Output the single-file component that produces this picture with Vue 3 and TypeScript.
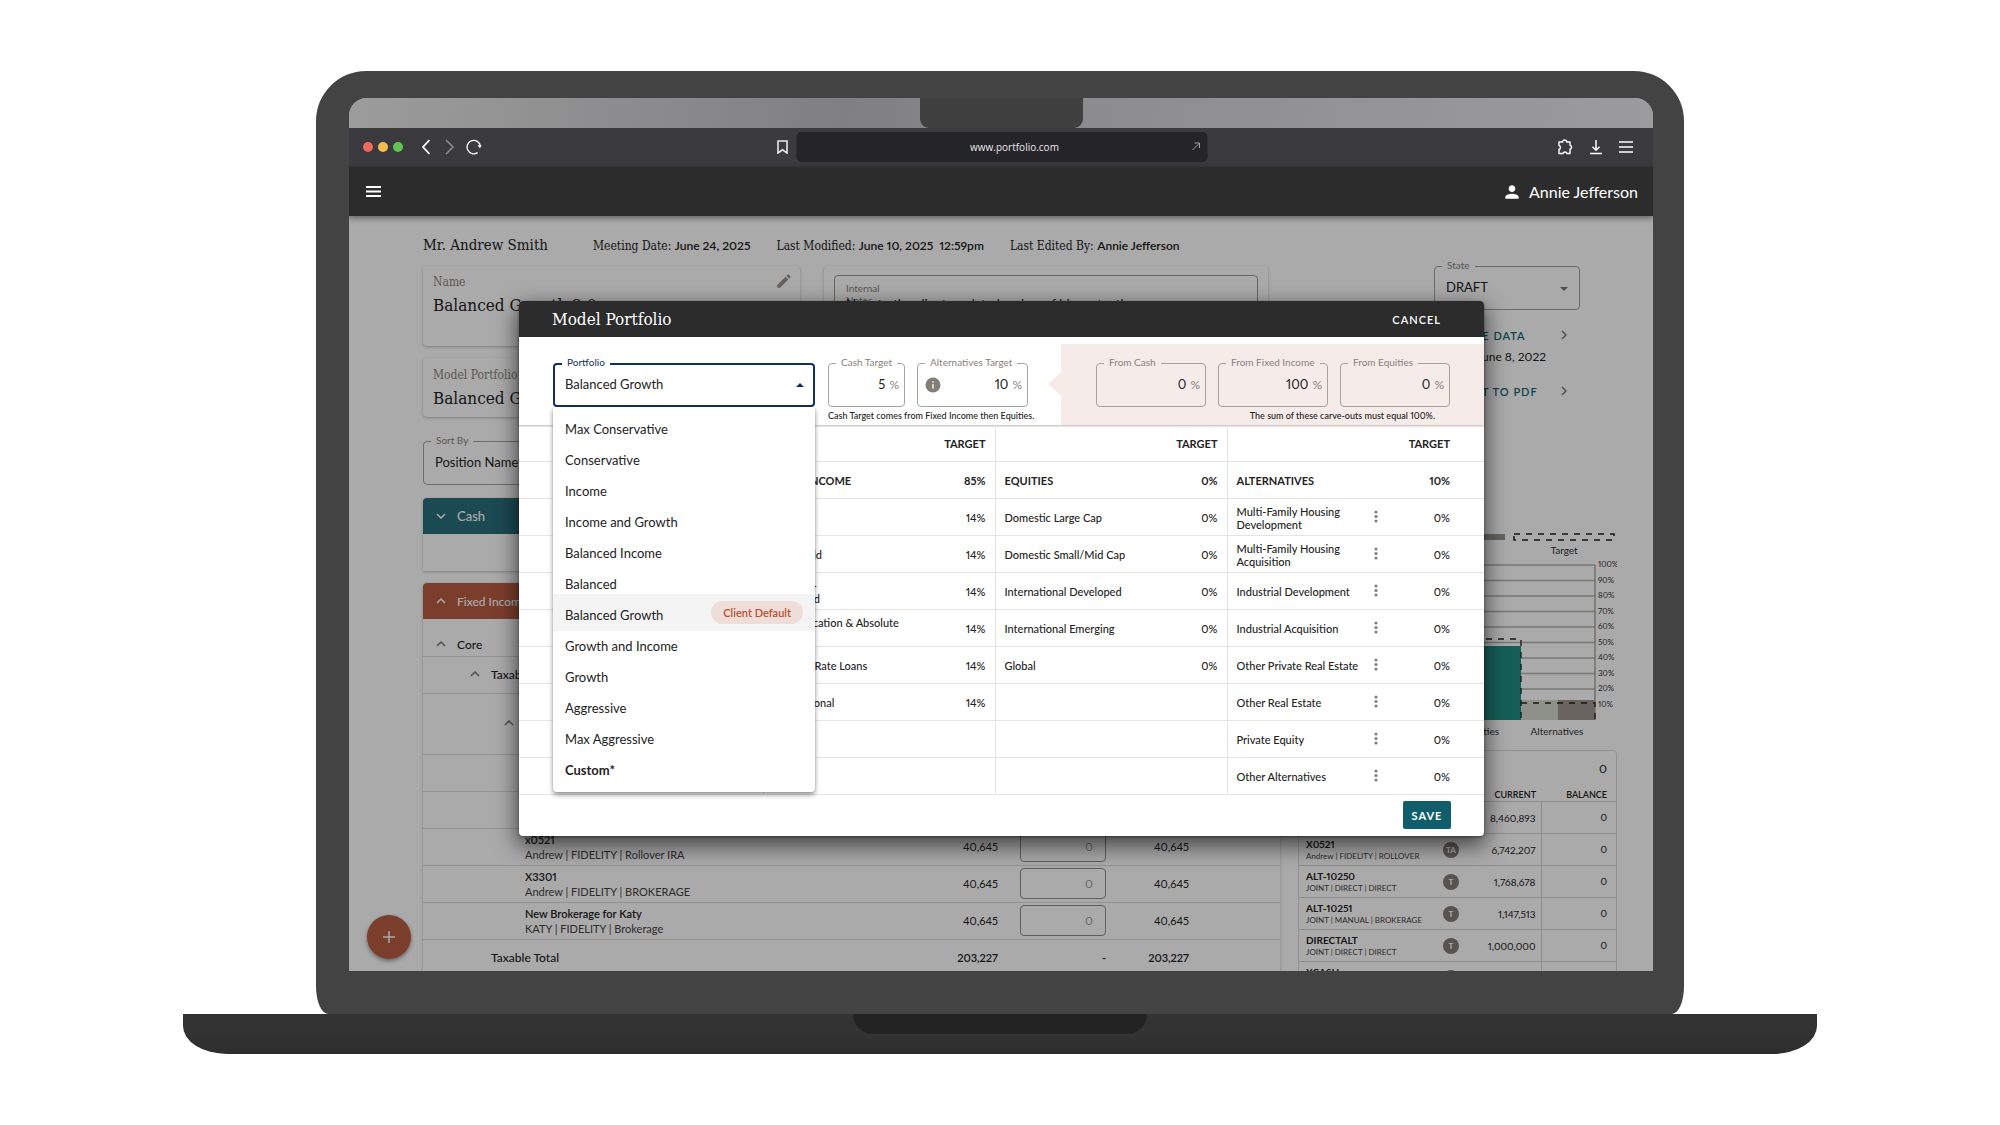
<script setup lang="ts">
import { ref } from 'vue'

interface Account { name: string; detail: string; tag: string; current: string; balance: string }
interface Alternative { name: string; value: string }

const portfolios: string[] = [
  'Max Conservative', 'Conservative', 'Income', 'Income and Growth', 'Balanced Income', 'Balanced',
  'Balanced Growth', 'Growth and Income', 'Growth', 'Aggressive', 'Max Aggressive', 'Custom*',
]
const selected = ref('Balanced Growth')
const clientDefault = 'Balanced Growth'

const fixedIncome: string[] = [
  'Core', 'High Yield', 'Inflation-\nProtected', 'Diversification & Absolute\nReturn',
  'Floating Rate Loans', 'International', '', '',
]
const equities: string[] = [
  'Domestic Large Cap', 'Domestic Small/Mid Cap', 'International Developed',
  'International Emerging', 'Global', '', '', '',
]
const alternatives: Alternative[] = [
  'Multi-Family Housing Development', 'Multi-Family Housing Acquisition', 'Industrial Development',
  'Industrial Acquisition', 'Other Private Real Estate', 'Other Real Estate', 'Private Equity',
  'Other Alternatives',
].map((name) => ({ name, value: '0%' }))

const carveOuts = [
  { id: 'from-cash', label: 'From Cash', value: '0' },
  { id: 'from-fixed', label: 'From Fixed Income', value: '100' },
  { id: 'from-equities', label: 'From Equities', value: '0' },
]

const positions = [
  { name: 'x0521', detail: 'Andrew | FIDELITY | Rollover IRA' },
  { name: 'X3301', detail: 'Andrew | FIDELITY | BROKERAGE' },
  { name: 'New Brokerage for Katy', detail: 'KATY | FIDELITY | Brokerage' },
]

const accounts: Account[] = [
  { name: 'X0520', detail: 'JOINT | FIDELITY | BROKERAGE', tag: 'T', current: '8,460,893', balance: '0' },
  { name: 'X0521', detail: 'Andrew | FIDELITY | ROLLOVER', tag: 'TA', current: '6,742,207', balance: '0' },
  { name: 'ALT-10250', detail: 'JOINT | DIRECT | DIRECT', tag: 'T', current: '1,768,678', balance: '0' },
  { name: 'ALT-10251', detail: 'JOINT | MANUAL | BROKERAGE', tag: 'T', current: '1,147,513', balance: '0' },
  { name: 'DIRECTALT', detail: 'JOINT | DIRECT | DIRECT', tag: 'T', current: '1,000,000', balance: '0' },
  { name: 'XCASH', detail: 'JOINT | DIRECT | DIRECT', tag: 'T', current: '500,000', balance: '0' },
]

const ticks = [100, 90, 80, 70, 60, 50, 40, 30, 20, 10]
const tickY = (t: number): number => 190 - t * 1.55
</script>

<template>
  <div class="stage">
    <div class="lid">
      <div class="screen">
        <div class="strip"><span class="camera"></span></div>

        <header class="browser">
          <span class="light red"></span><span class="light yellow"></span><span class="light green"></span>
          <button class="icon back" aria-label="Back">
            <svg width="10" height="16" viewBox="0 0 10 16" fill="none" stroke="#fff" stroke-width="1.8"><path d="M8.500 1 2 8l6.500 7" /></svg>
          </button>
          <button class="icon forward" aria-label="Forward">
            <svg width="10" height="16" viewBox="0 0 10 16" fill="none" stroke="#8d8d90" stroke-width="1.5"><path d="m1 1 7 7-7 7" /></svg>
          </button>
          <button class="icon" aria-label="Reload">
            <svg width="16" height="16" viewBox="0 0 16 16" fill="none" stroke="#fff" stroke-width="1.3"><path d="M11.6 13.6A6.7 6.7 0 1 1 14.4 7" /><path d="M11.4 6.2h4.3l-1.7 3z" fill="#fff" stroke="none" /></svg>
          </button>
          <div class="address">
            <button class="icon" aria-label="Bookmark">
              <svg width="12" height="14" viewBox="0 0 12 14" fill="none" stroke="#e8e8e8" stroke-width="1.6"><path d="M1.500 1h9v12L6 9.800 1.500 13z" /></svg>
            </button>
            <div class="urlbox">
              <input class="url" aria-label="Address" value="www.portfolio.com" />
              <svg class="go" width="9" height="9" viewBox="0 0 9 9" fill="none" stroke="#a2a2a6" stroke-width="1"><path d="M1 8 8 1M3 1h5v5" /></svg>
            </div>
          </div>
          <div class="tools">
            <button class="icon" aria-label="Extensions">
              <svg width="16" height="16" viewBox="0 0 16 16" fill="none" stroke="#fff" stroke-width="1.4" stroke-linejoin="round"><path d="M2 3h3.700a2 2 0 0 1 4 0h3.300v3.300a2 2 0 0 1 0 3.900v4.300H9.900a2 2 0 0 0-3.900 0H2v-4a2.100 2.100 0 0 0 0-4z" /></svg>
            </button>
            <button class="icon" aria-label="Downloads">
              <svg width="14" height="16" viewBox="0 0 14 16" fill="none" stroke="#fff" stroke-width="1.5"><path d="M7 1v10M3.500 7.800 7 11.300l3.500-3.500M1 14.500h12" /></svg>
            </button>
            <button class="icon" aria-label="Browser menu">
              <svg width="14" height="12" viewBox="0 0 14 12" stroke="#fff" stroke-width="1.4"><path d="M0 1h14M0 6h14M0 11h14" /></svg>
            </button>
          </div>
        </header>

        <header class="appbar">
          <button class="icon" aria-label="Menu">
            <svg width="15" height="11" viewBox="0 0 15 11" stroke="#fff" stroke-width="2"><path d="M0 1h15M0 5.500h15M0 10h15" /></svg>
          </button>
          <a class="user" href="#account">
            <svg width="20" height="20" viewBox="0 0 24 24" fill="#fff"><path d="M12 12c2.200 0 4-1.800 4-4s-1.800-4-4-4-4 1.800-4 4 1.800 4 4 4zm0 2c-2.700 0-8 1.300-8 4v2h16v-2c0-2.700-5.300-4-8-4z" /></svg>
            <span>Annie Jefferson</span>
          </a>
        </header>

        <main class="page">
          <section class="left">
            <div class="meta">
              <h1>Mr. Andrew Smith</h1>
              <p>Meeting Date: <b>June 24, 2025</b></p>
              <p>Last Modified: <b>June 10, 2025 &nbsp;12:59pm</b></p>
              <p>Last Edited By: <b>Annie Jefferson</b></p>
            </div>
            <div class="top">
              <div class="cards">
                <div class="card tall">
                  <span class="cap">Name</span>
                  <span class="big">Balanced Growth 2.0</span>
                  <button class="icon pencil" aria-label="Edit name">
                    <svg width="18" height="18" viewBox="0 0 24 24" fill="#9a928c"><path d="M3 17.250V21h3.750L17.810 9.940l-3.750-3.750zM20.710 7.040a1 1 0 0 0 0-1.410l-2.340-2.340a1 1 0 0 0-1.410 0l-1.830 1.830 3.750 3.750z" /></svg>
                  </button>
                </div>
                <div class="card">
                  <span class="cap">Model Portfolio</span>
                  <span class="big">Balanced Growth</span>
                </div>
                <div class="field sort">
                  <label for="sort">Sort By</label>
                  <select id="sort"><option>Position Name</option></select>
                </div>
              </div>
              <div class="card notes">
                <div class="notebox">
                  <label for="notes">Internal Notes</label>
                  <textarea id="notes">Note to the client: updated review of his cost, other</textarea>
                </div>
              </div>
            </div>

            <div class="group">
              <h2 class="cash">
                <svg width="10" height="6" viewBox="0 0 10 6" fill="none" stroke="#fff" stroke-width="1.5"><path d="m1 1 4 4 4-4" /></svg>Cash
              </h2>
              <div class="empty"></div>
            </div>
            <div class="group">
              <h2 class="fixed">
                <svg width="10" height="6" viewBox="0 0 10 6" fill="none" stroke="#fff" stroke-width="1.5"><path d="m1 5 4-4 4 4" /></svg>Fixed Income
              </h2>
              <table class="positions">
                <colgroup><col /><col class="c2" /><col class="c3" /><col class="c4" /><col class="c5" /></colgroup>
                <tbody>
                  <tr><td class="l1" colspan="5"><svg width="10" height="6" viewBox="0 0 10 6" fill="none" stroke="#777" stroke-width="1.500"><path d="m1 5 4-4 4 4" /></svg>Core</td></tr>
                  <tr><td class="l2" colspan="5"><svg width="10" height="6" viewBox="0 0 10 6" fill="none" stroke="#777" stroke-width="1.500"><path d="m1 5 4-4 4 4" /></svg>Taxable</td></tr>
                  <tr class="high"><td class="l3" colspan="5"><svg width="10" height="6" viewBox="0 0 10 6" fill="none" stroke="#777" stroke-width="1.500"><path d="m1 5 4-4 4 4" /></svg></td></tr>
                  <tr><td colspan="5"></td></tr>
                  <tr><td colspan="5"></td></tr>
                  <tr v-for="p in positions" :key="p.name">
                    <td class="acct"><strong>{{ p.name }}</strong><span>{{ p.detail }}</span></td>
                    <td class="num">40,645</td>
                    <td class="entry"><input :aria-label="`Change for ${p.name}`" value="0" /></td>
                    <td class="num">40,645</td>
                    <td></td>
                  </tr>
                  <tr class="total"><td class="sum">Taxable Total</td><td class="num">203,227</td><td class="num">-</td><td class="num">203,227</td><td></td></tr>
                </tbody>
              </table>
            </div>
          </section>

          <aside class="right">
            <div class="actions">
              <div class="field state">
                <label for="state">State</label>
                <select id="state"><option>DRAFT</option></select>
                <svg class="arrow" width="8" height="4" viewBox="0 0 8 4" fill="#777"><path d="M0 0h8L4 4z" /></svg>
              </div>
              <button class="action">UPDATE DATA
                <svg width="6" height="10" viewBox="0 0 6 10" fill="none" stroke="#777" stroke-width="1.500"><path d="m1 1 4 4-4 4" /></svg>
              </button>
              <p class="asof">As of June 8, 2022</p>
              <button class="action">EXPORT TO PDF
                <svg width="6" height="10" viewBox="0 0 6 10" fill="none" stroke="#777" stroke-width="1.500"><path d="m1 1 4 4-4 4" /></svg>
              </button>
            </div>

            <svg class="chart" viewBox="0 0 319 212" role="img" aria-label="Allocation chart">
              <rect x="107" y="4" width="100" height="6" fill="#9f9790" />
              <rect x="216" y="4" width="100" height="6" fill="none" stroke="#222" stroke-width="1.500" stroke-dasharray="6 6" />
              <text x="266" y="24" text-anchor="middle">Target</text>
              <g stroke="#b4b5b0" stroke-width="1.300">
                <line v-for="t in ticks" :key="t" x1="0" x2="297" :y1="tickY(t)" :y2="tickY(t)" />
                <line x1="297" x2="297" y1="35" y2="190" stroke="#9c9c98" />
              </g>
              <text v-for="t in ticks" :key="`l${t}`" class="tick" x="300" :y="tickY(t) + 2">{{ t }}%</text>
              <rect x="149" y="116" width="74" height="74" fill="#208f84" />
              <rect x="223" y="170" width="37" height="20" fill="#d6d8cf" />
              <rect x="260" y="170" width="37" height="20" fill="#9f9790" />
              <path d="M149 190V109h74v81M223 173h74v17" fill="none" stroke="#222" stroke-width="1.300" stroke-dasharray="6 6" />
              <text x="201" y="205" text-anchor="end">Equities</text>
              <text x="259" y="205" text-anchor="middle">Alternatives</text>
            </svg>

            <div class="accounts">
              <p class="grand">0</p>
              <table>
                <colgroup><col /><col class="a2" /><col class="a3" /><col class="a4" /></colgroup>
                <thead><tr><th></th><th></th><th class="r">CURRENT</th><th class="r">BALANCE</th></tr></thead>
                <tbody>
                  <tr v-for="a in accounts" :key="a.name">
                    <td><strong>{{ a.name }}</strong><span>{{ a.detail }}</span></td>
                    <td><i>{{ a.tag }}</i></td>
                    <td class="r">{{ a.current }}</td>
                    <td class="r bal">{{ a.balance }}</td>
                  </tr>
                </tbody>
              </table>
            </div>
          </aside>
          <button class="fab" aria-label="Add">
            <svg width="12" height="12" viewBox="0 0 12 12" stroke="#fff" stroke-width="1.500"><path d="M6 0v12M0 6h12" /></svg>
          </button>
          <div class="backdrop"></div>
        </main>

        <section class="modal" role="dialog" aria-labelledby="modal-title">
          <header class="modalbar">
            <h2 id="modal-title">Model Portfolio</h2>
            <button class="cancel">CANCEL</button>
          </header>
          <div class="controls">
            <div class="own">
              <div class="field portfolio">
                <label for="portfolio">Portfolio</label>
                <select id="portfolio" v-model="selected"><option v-for="p in portfolios" :key="p">{{ p }}</option></select>
                <svg class="arrow" width="8" height="4" viewBox="0 0 8 4" fill="#14305f"><path d="M0 4h8L4 0z" /></svg>
                <ul class="menu" role="listbox" aria-label="Portfolio">
                  <li v-for="p in portfolios" :key="p" role="option" :aria-selected="p === selected" :class="{ active: p === selected, custom: p === 'Custom*' }">
                    <span>{{ p }}</span><em v-if="p === clientDefault">Client Default</em>
                  </li>
                </ul>
              </div>
              <div class="targets">
                <div class="field">
                  <label for="cash-target">Cash Target</label>
                  <input id="cash-target" value="5" /><span class="pct">%</span>
                </div>
                <div class="field">
                  <label for="alt-target">Alternatives Target</label>
                  <svg class="info" width="16" height="16" viewBox="0 0 16 16"><circle cx="8" cy="8" r="7.500" fill="#857d77" /><path d="M8 7.200v4.300M8 4.300v1.500" stroke="#fff" stroke-width="1.400" /></svg>
                  <input id="alt-target" value="10" /><span class="pct">%</span>
                </div>
                <p class="hint">Cash Target comes from Fixed Income then Equities.</p>
              </div>
            </div>
            <div class="carve">
              <div v-for="c in carveOuts" :key="c.id" class="field">
                <label :for="c.id">{{ c.label }}</label>
                <input :id="c.id" :value="c.value" /><span class="pct">%</span>
              </div>
              <p class="hint">The sum of these carve-outs must equal 100%.</p>
            </div>
          </div>
          <table class="targetsTable">
            <colgroup><col class="t1" /><col class="t2" /><col class="tv" /><col class="t2" /><col class="tv" /><col class="t3" /><col class="td" /><col class="te" /></colgroup>
            <thead>
              <tr><th></th><th class="sep"></th><th class="val">TARGET</th><th class="sep"></th><th class="val">TARGET</th><th class="sep"></th><th></th><th class="val last">TARGET</th></tr>
            </thead>
            <tbody>
              <tr class="heads">
                <th></th><th class="sep">FIXED INCOME</th><th class="val">85%</th><th class="sep">EQUITIES</th><th class="val">0%</th>
                <th class="sep">ALTERNATIVES</th><th></th><th class="val last">10%</th>
              </tr>
              <tr v-for="(a, i) in alternatives" :key="a.name">
                <td></td>
                <td class="sep">{{ fixedIncome[i] }}</td><td class="val">{{ fixedIncome[i] ? '14%' : '' }}</td>
                <td class="sep">{{ equities[i] }}</td><td class="val">{{ equities[i] ? '0%' : '' }}</td>
                <td class="sep">{{ a.name }}</td>
                <td class="more">
                  <button class="icon" :aria-label="`Options for ${a.name}`">
                    <svg width="4" height="13" viewBox="0 0 4 13" fill="#857d77"><circle cx="2" cy="2" r="1.600" /><circle cx="2" cy="6.500" r="1.600" /><circle cx="2" cy="11" r="1.600" /></svg>
                  </button>
                </td>
                <td class="val last">{{ a.value }}</td>
              </tr>
            </tbody>
          </table>
          <footer class="foot"><button class="save">SAVE</button></footer>
        </section>
      </div>
    </div>
    <div class="base"><span class="lip"></span></div>
  </div>
</template>

<style>
body { margin: 0; background: #fff; }
</style>

<style scoped>
* { box-sizing: border-box; }
.stage { padding: 71px 0; font-family: Lato, "Liberation Sans", sans-serif; font-size: 13px; font-variant-numeric: proportional-nums; color: #232323; }
h1, h2, p, ul { margin: 0; padding: 0; font-weight: 400; }
button, input, select, textarea { font: inherit; color: inherit; border: 0; background: none; padding: 0; margin: 0; outline: 0; }
select { appearance: none; }
.icon { display: inline-flex; align-items: center; justify-content: center; }

.lid { width: 68.4%; margin: 0 auto; padding: 27px 31px 43px 33px; background: #434343; border-radius: 50px 50px 12px 12px / 50px 50px 28px 28px; }
.screen { position: relative; display: flex; flex-direction: column; aspect-ratio: 1304 / 873; overflow: hidden; border-radius: 18px 18px 0 0; background: #aaa; }
.base { width: 81.7%; margin: 0 auto; height: 40px; background: linear-gradient(#333 50%, #2d2d2d); border-radius: 0 0 44px 44px / 0 0 28px 28px; display: flex; justify-content: center; }
.lip { width: 18%; height: 20px; background: #232323; border-radius: 0 0 20px 20px; }
.strip { flex: none; height: 30px; background: linear-gradient(100deg, #9c9c9d, #808082 38%, #8e8e90 60%, #9b9b9d); display: flex; justify-content: center; }
.camera { width: 163px; height: 30px; background: #404040; border-radius: 0 0 9px 9px; }

.browser { flex: none; height: 39px; background: #3b3a3f; display: flex; align-items: center; padding: 0 20px 2px 14px; position: relative; }
.light { width: 10px; height: 10px; border-radius: 50%; margin-right: 5px; }
.red { background: #ee6a5f; }
.yellow { background: #f5bd4f; }
.green { background: #61c454; }
.back { margin-left: 13px; }
.forward { margin: 0 11px 0 14px; }
.address { position: absolute; left: 50%; transform: translateX(-50%); width: 431px; display: flex; align-items: center; gap: 8px; margin-left: -9px; }
.urlbox { flex: 1; height: 30px; background: #252429; border-radius: 5px; display: flex; align-items: center; padding: 0 7px 0 41px; }
.url { flex: 1; min-width: 0; text-align: center; color: #e8e8ea; font-family: "Open Sans", sans-serif; font-size: 10px; }
.tools { margin-left: auto; display: flex; gap: 16px; align-items: center; }

.appbar { flex: none; height: 49px; background: #2c2c2c; display: flex; align-items: center; justify-content: space-between; padding: 0 15px 0 17px; color: #fff; box-shadow: 0 2px 6px rgba(0, 0, 0, .45); position: relative; z-index: 1; }
.user { color: #fff; text-decoration: none; display: flex; gap: 7px; align-items: center; font-size: 16px; }

.page { position: relative; flex: 1; min-height: 0; background: #fff; display: grid; grid-template-columns: minmax(0, 1fr) 319px; gap: 18px; padding: 0 36px 0 74px; overflow: hidden; }
.backdrop { position: absolute; inset: 0; background: rgba(0, 0, 0, .333); }
.meta { height: 50px; padding-top: 18px; display: flex; align-items: baseline; white-space: nowrap; font-family: "DejaVu Serif Condensed", "DejaVu Serif", serif; font-size: 12px; line-height: 22px; }
.meta h1 { font-size: 15px; margin-right: 45px; }
.meta p + p { margin-left: 26px; }
.meta b { font-family: Lato, sans-serif; font-size: 12px; font-weight: 600; }
.top { display: grid; grid-template-columns: 377px 444px; gap: 24px; height: 232px; }
.card { position: relative; display: flex; flex-direction: column; border-radius: 4px; box-shadow: 0 1px 3px rgba(0, 0, 0, .25); height: 59px; padding: 8px 10px; margin-bottom: 12px; font-family: "DejaVu Serif Condensed", "DejaVu Serif", serif; }
.card.tall { height: 80px; padding-top: 7px; }
.cap { font-size: 12px; line-height: 18px; color: #8a837d; }
.big { font-size: 17px; line-height: 28px; }
.pencil { position: absolute; right: 7px; top: 6px; }
.card.notes { height: 220px; padding: 9px 10px; }
.notebox { border: 1px solid #999; border-radius: 4px; height: 180px; padding: 6px 11px; font-family: Lato, sans-serif; font-size: 10px; line-height: 12px; color: #8a837d; position: relative; }
.notebox label { display: block; width: 40px; }
.notebox textarea { position: absolute; left: 11px; top: 20px; width: 380px; height: 80px; font-size: 13px; line-height: 16px; color: #232323; resize: none; overflow: hidden; }

.field { position: relative; display: flex; align-items: center; height: 44px; border: 1px solid #a8a29d; border-radius: 4px; }
.field label { position: absolute; left: 7px; top: -9px; padding: 0 5px; background: #fff; color: #8a837d; font-size: 10px; line-height: 14px; white-space: nowrap; }
.field select { width: 100%; height: 100%; padding: 0 11px 2px; }
.field input { flex: 1; width: 0; height: 100%; text-align: right; font-size: 13px; padding-bottom: 2px; }
.pct { color: #8a837d; font-size: 12px; margin: 0 5px 2px 4px; }
.arrow { position: absolute; right: 11px; top: 20px; pointer-events: none; }
.sort { margin-top: 24px; }

.group { border-radius: 4px 4px 0 0; box-shadow: 0 1px 3px rgba(0, 0, 0, .25); margin-bottom: 12px; }
.group h2 { height: 36px; display: flex; align-items: center; gap: 11px; padding-left: 13px; color: #fff; font-size: 13px; font-weight: 500; border-radius: 4px 4px 0 0; }
.group h2.fixed { font-size: 12px; }
.cash { background: #2a6f7b; }
.fixed { background: #bb5e42; }
.empty { height: 37px; }
table { border-collapse: collapse; width: 100%; table-layout: fixed; }
td, th { padding: 0; text-align: left; font-weight: 400; }
.c2 { width: 100px; } .c3 { width: 108px; } .c4 { width: 83px; } .c5 { width: 91px; }
.positions { font-size: 12px; }
.positions tr { height: 37px; border-bottom: 1px solid #dddcd9; }
.positions td { height: 37px; }
.positions .high td { height: 61px; }
.positions svg { margin-right: 11px; vertical-align: 2px; }
.positions .l1 { padding: 14px 0 0 13px; font-weight: 500; }
.positions .l2 { padding-left: 47px; font-weight: 500; }
.positions .l3 { padding-left: 81px; }
.positions .acct { padding-left: 102px; line-height: 15px; }
.acct strong, .acct span { display: block; font-size: 11px; font-weight: 600; }
.acct span { color: #444; font-weight: 400; }
.positions .num { text-align: right; font-size: 11px; }
.positions .sum { padding-left: 68px; font-weight: 500; }
.total .num { font-weight: 600; }
.entry input { display: block; width: 86px; height: 31px; margin-left: 22px; border: 1px solid #8f8f8a; border-radius: 4px; text-align: right; padding-right: 12px; color: #a5a29c; }
.positions .entry { padding: 0; }

.actions { margin: 50px 37px 0 136px; height: 264px; }
.state { margin-bottom: 14px; }
.action { display: flex; width: 100%; justify-content: space-between; align-items: center; padding: 0 13px 0 7px; height: 22px; color: #1a6570; font-weight: 600; letter-spacing: 1px; font-size: 11px; white-space: nowrap; }
.asof { line-height: 22px; margin-bottom: 12px; padding-right: 34px; text-align: right; font-size: 12px; white-space: nowrap; }
.chart { display: block; width: 100%; font-size: 10px; fill: #333; }
.chart .tick { font-size: 8px; }
.accounts { margin-top: 8px; border: 1px solid #dddcd9; border-radius: 4px; font-size: 10px; }
.grand { text-align: right; padding: 8px 9px 0 0; line-height: 20px; height: 38px; font-size: 12px; }
.a2 { width: 31px; } .a3 { width: 67px; } .a4 { width: 75px; }
.accounts th { font-size: 9px; line-height: 12px; font-weight: 600; }
.accounts tbody tr { border-top: 1px solid #d3d2ce; height: 32px; }
.accounts td:first-child { padding-left: 7px; }
.accounts td { white-space: nowrap; }
.accounts strong, .accounts td span { display: block; font-size: 10px; line-height: 13px; }
.accounts td span { font-size: 8px; line-height: 11px; color: #444; }
.accounts i { display: flex; width: 16px; height: 16px; border-radius: 50%; background: #857d77; color: #fff; align-items: center; justify-content: center; font: 700 8px Lato, sans-serif; }
.accounts .r { text-align: right; padding-right: 5px; }
.accounts .r:last-child { padding-right: 9px; }
.accounts .bal { border-left: 1px solid #d3d2ce; padding-bottom: 2px; }
.fab { position: absolute; left: 18px; bottom: 12px; width: 44px; height: 44px; border-radius: 50%; background: #bb5e42; box-shadow: 0 2px 4px rgba(0, 0, 0, .4); display: flex; align-items: center; justify-content: center; }

.modal { position: absolute; z-index: 2; top: 203px; left: 170px; right: 169px; background: #fff; border-radius: 4px; box-shadow: 0 8px 22px 2px rgba(0, 0, 0, .6), 0 1px 3px rgba(0, 0, 0, .4); }
.modalbar { height: 36px; background: #2c2c2c; border-radius: 4px 4px 0 0; color: #fff; display: flex; align-items: center; justify-content: space-between; padding: 0 43px 0 33px; }
.modalbar h2 { font-family: "DejaVu Serif Condensed", "DejaVu Serif", serif; font-size: 17px; }
.cancel { font-size: 11px; letter-spacing: 1px; font-weight: 600; }
.controls { display: flex; height: 88px; padding-top: 7px; box-shadow: 0 1px 2px rgba(0, 0, 0, .3); }
.own { flex: 1; display: flex; gap: 13px; padding: 19px 0 0 34px; }
.portfolio { width: 262px; border: 2px solid #14305f; }
.portfolio label { color: #14305f; top: -10px; }
.portfolio select { padding-left: 10px; }
.portfolio .arrow { right: 9px; top: 18px; }
.targets { display: grid; grid-template-columns: 77px 111px; gap: 0 12px; align-content: start; }
.hint { grid-column: 1 / -1; font-size: 9px; line-height: 18px; white-space: nowrap; font-weight: 500; }
.info { margin-left: 7px; }
.carve { position: relative; display: grid; grid-template-columns: repeat(3, 110px); gap: 0 12px; align-content: start; width: 423px; padding: 19px 34px 0 35px; background: #f5ebe9; }
.carve::before { content: ""; position: absolute; left: -13px; top: 28px; border: 12px solid transparent; border-left-width: 0; border-right: 13px solid #f5ebe9; }
.carve label { background: #f5ebe9; }
.carve .hint { text-align: right; padding-right: 15px; }

.menu { position: absolute; z-index: 3; top: 42px; left: -2px; right: -2px; padding: 7px 0 6px; list-style: none; background: #fff; border-radius: 0 0 4px 4px; box-shadow: 0 3px 5px rgba(0, 0, 0, .4), 0 0 2px rgba(0, 0, 0, .2); }
.menu li { display: flex; align-items: center; justify-content: space-between; height: 31px; padding: 0 12px; }
.menu li span { padding-bottom: 2px; }
.menu li.active { height: 37px; margin-top: -6px; background: #f4f4f4; }
.menu li.active span { padding: 4px 0 0; }
.menu li.custom { font-weight: 700; }
.menu em { font-style: normal; font-size: 11px; font-weight: 600; color: #b9502f; background: #efddd9; border-radius: 12px; line-height: 23px; padding: 0 12px; }

.targetsTable { font-size: 11px; }
.targetsTable .t1 { width: 244px; } .t2 { width: 142px; } .tv { width: 90px; } .t3 { width: 142px; } .td { width: 14px; }
.targetsTable tr { border-bottom: 1px solid #e6e4df; height: 37px; }
.targetsTable thead tr { height: 36px; }
.targetsTable th, .targetsTable td { padding-top: 2px; }
.targetsTable th { font-weight: 700; font-size: 11px; }
.targetsTable td { font-weight: 500; line-height: 13px; }
.targetsTable .sep { border-left: 1px solid #e6e4df; padding-left: 9px; white-space: pre-line; }
.targetsTable .val { text-align: right; padding-right: 9px; }
.targetsTable .val.last { padding-right: 34px; }
.more { text-align: center; }
.foot { height: 41px; display: flex; align-items: center; justify-content: flex-end; padding: 0 33px; }
.save { width: 48px; height: 28px; border-radius: 2px; background: #105e6c; color: #fff; font-size: 11px; font-weight: 700; letter-spacing: 1px; }
</style>
